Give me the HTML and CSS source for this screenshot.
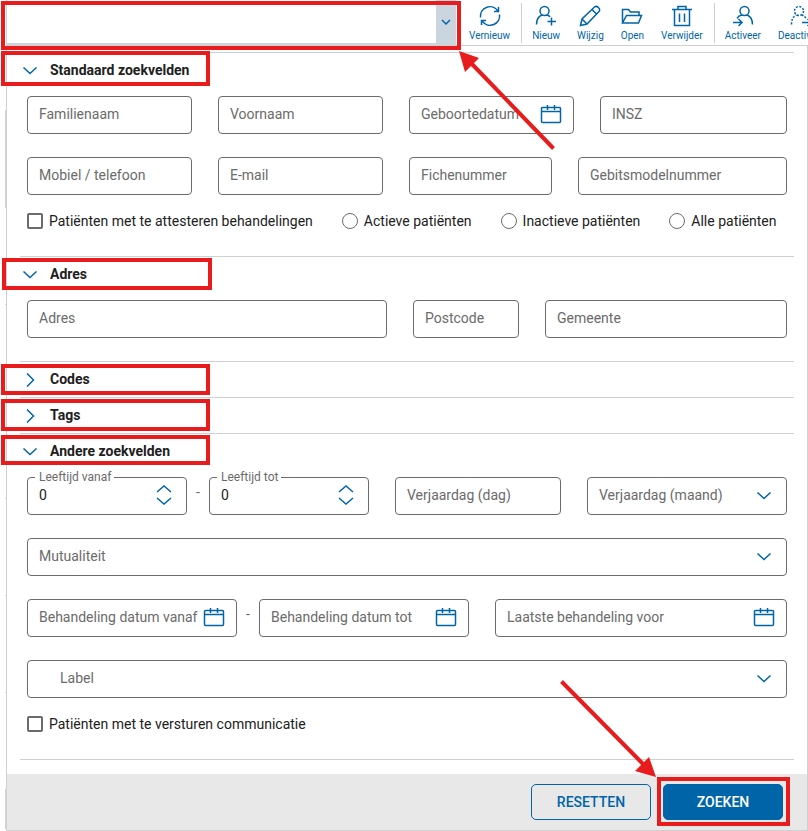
FILE: index.html
```html
<!DOCTYPE html>
<html lang="nl">
<head>
<meta charset="utf-8">
<meta name="viewport" content="width=device-width, initial-scale=1">
<title>Patiënten zoeken</title>
<link rel="stylesheet" href="styles.css">
</head>
<body>
<svg class="sprite" aria-hidden="true">
  <symbol id="down" viewBox="0 0 22 22"><path d="M4.500 7.500L11 13.500L17.500 7.500"/></symbol>
  <symbol id="right" viewBox="0 0 22 22"><path d="M8 4.500L14.500 11L8 17.500"/></symbol>
  <symbol id="calendar" viewBox="0 0 22 22"><path d="M2.500 3.500h17a1 1 0 0 1 1 1v13a1 1 0 0 1-1 1h-17a1 1 0 0 1-1-1v-13a1 1 0 0 1 1-1zM1.500 7.500h19M7.500 1v5M14.500 1v5"/></symbol>
</svg>
<div class="page">
  <header class="toolbar">
    <div class="combo">
      <input class="combo__input" type="text" aria-label="Zoeken">
      <button class="combo__toggle" type="button" aria-label="Zoekvelden tonen"><svg viewBox="0 0 10 10"><path d="M1 3l4 4 4-4"/></svg></button>
    </div>
    <nav class="tools" aria-label="Acties">
      <button class="tool" type="button"><svg viewBox="0 0 22 22"><path d="M1.500 12.500A9.500 9.500 0 0 1 18.500 5.500M20.500 9.500A9.500 9.500 0 0 1 3.500 16.500M19.500 2v4.500h-4.500M2.500 20v-4.500h4.500"/></svg>Vernieuw</button>
      <span class="rule"></span>
      <button class="tool" type="button"><svg viewBox="0 0 22 22"><circle cx="9.500" cy="6" r="4.500"/><path d="M1.500 19.500c0-5 1.500-8 5.500-9.500M12 10c1.500.5 2.500 1 3 2M16.500 12.500v8M12.500 16.500h8.500"/></svg>Nieuw</button>
      <button class="tool" type="button"><svg viewBox="0 0 22 22"><path d="M1.500 20.500l1.500-6.500L15.500 2c2.500-2 6.500 2 4.500 4.500L8 19zM13 4.500l4.500 4.500M3 14l5 5"/></svg>Wijzig</button>
      <button class="tool" type="button"><svg viewBox="0 0 22 22"><path d="M1.500 18V4.500h6l2 2.500h8.500v3.500M1.500 18l4-7.500h15l-3 7.500z"/></svg>Open</button>
      <button class="tool" type="button"><svg viewBox="0 0 22 22"><path d="M1 4.500h20M7 4.500V1.500h8v3M3.500 4.500v16h15v-16M8.500 8.500v8.500M13.500 8.500v8.500"/></svg>Verwijder</button>
      <span class="rule"></span>
      <button class="tool" type="button"><svg viewBox="0 0 22 22"><circle cx="12.500" cy="6" r="4.500"/><path d="M5 13.500c1-2 2.500-3 5-3.500M15 10c4 1.500 5.500 4.500 5.500 9.500M1 17.500h8.500M6.500 14l3.500 3.500L6.500 21"/></svg>Activeer</button>
      <button class="tool" type="button"><svg viewBox="0 0 22 22"><g stroke-dasharray="2 1.500"><circle cx="9" cy="6" r="4.500"/><path d="M1.500 19.500c0-5 1.500-8 5-9.500M11.500 10c2 .5 3.500 1.500 4.500 3.500"/></g><path d="M12 17.500h8.500M17.500 14l3.500 3.500-3.500 3.500"/></svg>Deactiveer</button>
    </nav>
  </header>

  <form class="panel">
    <section class="section">
      <h2><button class="section__head" type="button" aria-expanded="true"><svg><use href="#down"/></svg>Standaard zoekvelden</button></h2>
      <div class="section__body">
        <div class="row row--name">
          <label class="field"><input type="text"><span class="field__label">Familienaam</span></label>
          <label class="field"><input type="text"><span class="field__label">Voornaam</span></label>
          <label class="field"><input type="text"><span class="field__label">Geboortedatum</span><svg class="field__icon"><use href="#calendar"/></svg></label>
          <label class="field"><input type="text"><span class="field__label">INSZ</span></label>
        </div>
        <div class="row row--contact">
          <label class="field"><input type="tel"><span class="field__label">Mobiel / telefoon</span></label>
          <label class="field"><input type="email"><span class="field__label">E-mail</span></label>
          <label class="field"><input type="text"><span class="field__label">Fichenummer</span></label>
          <label class="field"><input type="text"><span class="field__label">Gebitsmodelnummer</span></label>
        </div>
        <div class="checks">
          <label class="check"><input type="checkbox">Patiënten met te attesteren behandelingen</label>
          <label class="check"><input type="radio" name="status">Actieve patiënten</label>
          <label class="check"><input type="radio" name="status">Inactieve patiënten</label>
          <label class="check"><input type="radio" name="status">Alle patiënten</label>
        </div>
      </div>
    </section>

    <section class="section">
      <h2><button class="section__head" type="button" aria-expanded="true"><svg><use href="#down"/></svg>Adres</button></h2>
      <div class="section__body">
        <div class="row row--address">
          <label class="field"><input type="text"><span class="field__label">Adres</span></label>
          <label class="field"><input type="text"><span class="field__label">Postcode</span></label>
          <label class="field"><input type="text"><span class="field__label">Gemeente</span></label>
        </div>
      </div>
    </section>

    <section class="section">
      <h2><button class="section__head" type="button" aria-expanded="false"><svg><use href="#right"/></svg>Codes</button></h2>
    </section>

    <section class="section">
      <h2><button class="section__head" type="button" aria-expanded="false"><svg><use href="#right"/></svg>Tags</button></h2>
    </section>

    <section class="section">
      <h2><button class="section__head" type="button" aria-expanded="true"><svg><use href="#down"/></svg>Andere zoekvelden</button></h2>
      <div class="section__body">
        <div class="row row--age">
          <div class="range">
            <label class="field field--filled"><input type="number" value="0"><span class="field__label">Leeftijd vanaf</span><svg class="field__icon" viewBox="0 0 22 22"><path d="M4 7l7-6 7 6M4 13l7 6 7-6"/></svg></label>
            <span class="range__dash">-</span>
            <label class="field field--filled"><input type="number" value="0"><span class="field__label">Leeftijd tot</span><svg class="field__icon" viewBox="0 0 22 22"><path d="M4 7l7-6 7 6M4 13l7 6 7-6"/></svg></label>
          </div>
          <label class="field"><input type="text"><span class="field__label">Verjaardag (dag)</span></label>
          <label class="field"><select><option></option></select><span class="field__label">Verjaardag (maand)</span><svg class="field__icon"><use href="#down"/></svg></label>
        </div>
        <div class="row">
          <label class="field"><select><option></option></select><span class="field__label">Mutualiteit</span><svg class="field__icon"><use href="#down"/></svg></label>
        </div>
        <div class="row row--dates">
          <div class="range">
            <label class="field"><input type="text"><span class="field__label">Behandeling datum vanaf</span><svg class="field__icon"><use href="#calendar"/></svg></label>
            <span class="range__dash">-</span>
            <label class="field"><input type="text"><span class="field__label">Behandeling datum tot</span><svg class="field__icon"><use href="#calendar"/></svg></label>
          </div>
          <label class="field"><input type="text"><span class="field__label">Laatste behandeling voor</span><svg class="field__icon"><use href="#calendar"/></svg></label>
        </div>
        <div class="row">
          <label class="field field--indent"><select><option></option></select><span class="field__label">Label</span><svg class="field__icon"><use href="#down"/></svg></label>
        </div>
        <div class="checks">
          <label class="check"><input type="checkbox">Patiënten met te versturen communicatie</label>
        </div>
      </div>
    </section>

    <div class="end"></div>
    <footer class="actions">
      <button class="btn" type="reset">RESETTEN</button>
      <button class="btn btn--primary" type="submit">ZOEKEN</button>
    </footer>
  </form>

  <svg class="marks" width="808" height="831" viewBox="0 0 808 831" aria-hidden="true">
    <path class="marks__edge" d="M5.500 110v98M5.500 304v1M5.500 498v1M5.500 595v1M5.500 692v1M5.500 789v40"/>
    <rect x="3" y="3" width="456" height="45"/>
    <rect x="3" y="53" width="205" height="31"/>
    <rect x="4" y="260" width="206" height="28"/>
    <rect x="3" y="366" width="205" height="27"/>
    <rect x="3" y="401" width="205" height="28"/>
    <rect x="3" y="437" width="205" height="26"/>
    <rect x="659" y="779" width="129" height="45"/>
    <path d="M553.500 148.500L471 63M561.500 681.500L643 764"/>
    <path class="marks__head" d="M459 51l20 7-14 14zM656 777l-7-20-14 14z"/>
  </svg>
</div>
</body>
</html>
```
FILE: styles.css
```css
* {
  box-sizing: border-box;
}

body {
  margin: 0;
  background: #fff;
  color: #212121;
  font: 14px/16px Roboto, sans-serif;
}

button,
input,
select {
  margin: 0;
  font: inherit;
  color: inherit;
}

button {
  padding: 0;
  border: 0;
  background: none;
  cursor: pointer;
}

svg {
  fill: none;
  stroke: #0064a8;
  stroke-width: 1.5;
}

.sprite {
  position: absolute;
  width: 0;
  height: 0;
}

.page {
  position: relative;
  overflow: hidden;
}

/* Toolbar */
.toolbar {
  display: flex;
  height: 45px;
  padding-left: 6px;
}

.combo {
  display: flex;
  flex: 0 0 450px;
  border: solid #cbd5df;
  border-width: 0 0 2px 1px;
}

.combo__input {
  flex: 1;
  min-width: 0;
  border: 0;
  padding: 0 12px;
  outline: 0;
}

.combo__toggle {
  width: 20px;
  background: #cbd5df;
}

.combo__toggle svg {
  width: 10px;
  height: 10px;
}

.tools {
  display: flex;
  gap: 17px;
  padding-left: 13px;
}

.tool {
  display: flex;
  flex-direction: column;
  align-items: center;
  gap: 1px;
  padding-top: 5px;
  color: #0064a8;
  font-size: 10px;
  line-height: 16px;
}

.tool svg {
  width: 22px;
  height: 22px;
}

.rule {
  width: 1px;
  height: 40px;
  margin: 3px -7px 0 -6px;
  background: #d0d0d0;
}

/* Search panel */
.panel {
  margin-left: 6px;
  padding-top: 6px;
  border: 1px solid #d0d0d0;
}

.section,
.end {
  margin: 0 13px;
  border-top: 1px solid #d0d0d0;
}

.end {
  height: 15px;
}

h2 {
  margin: 0;
  font-size: 14px;
}

.section__head {
  display: flex;
  align-items: center;
  gap: 9px;
  width: 100%;
  height: 35px;
  padding-bottom: 2px;
  font-weight: 700;
}

.section__head svg {
  width: 22px;
  height: 22px;
  margin: 2px 0 0 -1px;
}

.section__body {
  padding: 8px 7px 23px;
}

.row {
  display: grid;
  gap: 26px;
}

.row + .row {
  margin-top: 23px;
}

.row--name {
  grid-template-columns: 165fr 165fr 165fr 187fr;
}

.row--contact {
  grid-template-columns: 165fr 165fr 143fr 209fr;
}

.row--address {
  grid-template-columns: 360fr 106fr 242fr;
}

.row--age {
  grid-template-columns: 342fr 166fr 200fr;
}

.row--dates {
  grid-template-columns: 442fr 292fr;
}

.range {
  display: grid;
  grid-template-columns: 1fr 22px 1fr;
}

.range__dash {
  padding-top: 7px;
  text-align: center;
  color: #6b6b6b;
}

/* The control, its label and its icon share one grid cell */
.field {
  display: grid;
  grid-template: 38px / minmax(0, 1fr);
  align-items: center;
  color: #6b6b6b;
}

.field > * {
  grid-area: 1 / 1;
}

.field input,
.field select {
  appearance: none;
  width: 100%;
  height: 38px;
  padding: 0 40px 2px 11px;
  border: 1px solid #6b6b6b;
  border-radius: 4px;
  background: #fff;
  color: #212121;
}

.field input[type="number"] {
  appearance: textfield;
}

.field__label {
  padding: 0 0 2px 12px;
  white-space: nowrap;
  pointer-events: none;
}

.field--filled .field__label {
  place-self: start;
  margin: -8px 0 0 8px;
  padding: 0 3px 0 4px;
  background: #fff;
  font-size: 12px;
}

.field--indent .field__label {
  padding-left: 33px;
}

.field__icon {
  justify-self: end;
  width: 22px;
  height: 22px;
  margin-right: 12px;
  pointer-events: none;
}

.checks {
  display: flex;
  flex-wrap: wrap;
  gap: 12px 29px;
  margin: 18px 0 4px;
}

.check {
  display: flex;
  align-items: center;
  gap: 6px;
}

.check input {
  appearance: none;
  width: 16px;
  height: 16px;
  border: 2px solid #6b6b6b;
  border-radius: 2px;
}

.check input[type="radio"] {
  border-width: 1px;
  border-radius: 50%;
}

.check input:checked {
  background: #0064a8;
}

.actions {
  display: flex;
  justify-content: flex-end;
  gap: 12px;
  padding: 10px 24px;
  background: #e8e8e8;
}

.btn {
  width: 120px;
  height: 36px;
  border: 1px solid #0064a8;
  border-radius: 5px;
  color: #0064a8;
  font-weight: 500;
}

.btn--primary {
  background: #0064a8;
  color: #fff;
}

/* Highlight boxes and arrows over the page */
.marks {
  position: absolute;
  top: 0;
  left: 0;
  pointer-events: none;
  stroke: #e81c1c;
  stroke-width: 4;
}

.marks__edge {
  stroke: #cbd5df;
  stroke-width: 1;
}

.marks__head {
  fill: #e81c1c;
  stroke: none;
}
```
